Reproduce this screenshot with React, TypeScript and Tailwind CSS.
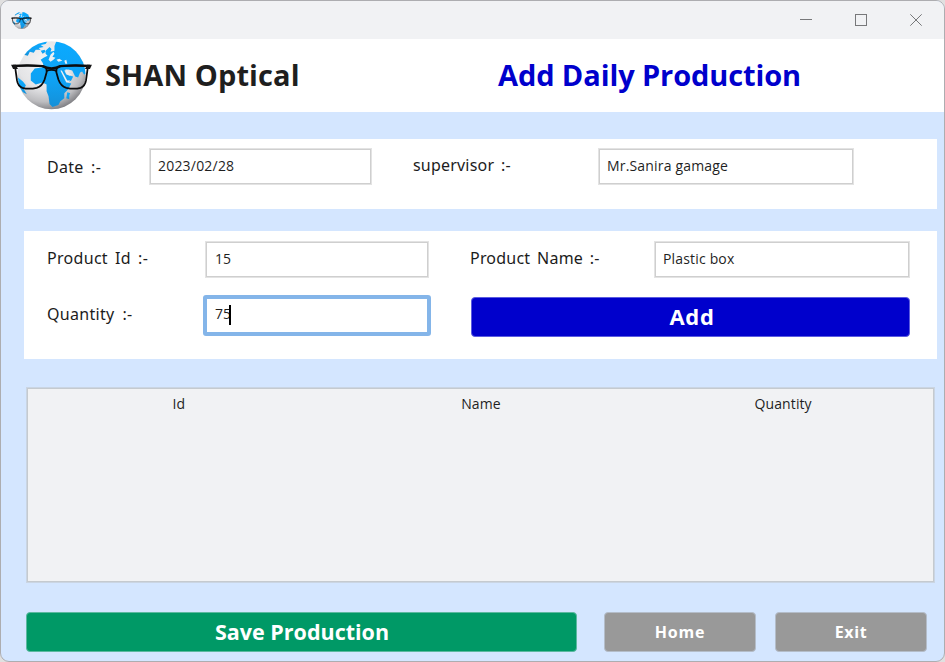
import type { ReactNode } from "react";

function Globe({ className, id, rim = 2.4 }: { className: string; id: string; rim?: number }) {
  return (
    <svg viewBox="0 0 84 72" className={className} aria-hidden="true">
      <defs>
        <radialGradient id={`${id}-sea`} cx="40%" cy="30%" r="72%">
          <stop offset="0" stopColor="#f4f4f5" />
          <stop offset="0.55" stopColor="#e4e4e6" />
          <stop offset="0.82" stopColor="#bdbdc0" />
          <stop offset="1" stopColor="#808084" />
        </radialGradient>
        <linearGradient id={`${id}-land`} x1="0" y1="0" x2="0" y2="1">
          <stop offset="0" stopColor="#0aaaff" />
          <stop offset="0.6" stopColor="#0fa2f4" />
          <stop offset="1" stopColor="#1590d8" />
        </linearGradient>
        <clipPath id={`${id}-clip`}>
          <circle cx="42" cy="35.8" r="34.5" />
        </clipPath>
      </defs>
      <circle cx="42" cy="35.8" r="34.5" fill={`url(#${id}-sea)`} />
      <g clipPath={`url(#${id}-clip)`}>
        <g fill={`url(#${id}-land)`}>
          <path d="M14 15 L18 9 L25 4 L33 1 L38 1 L36 4 L31 5 L34 7 L29 8 L31 10 L26 10 L24 13 L20 12 L18 16Z" />
          <path d="M31 11 L35 10 L36 12 L33 14Z" />
          <path d="M33 23 L31 20 L34 18 L38 16 L36 14 L36 11 L40 7 L42 9 L41 12 L45 11 L45 6 L47 1 L56 1 L68 8 L77 22 L78 34 L75 35 L73 32 L71 33 L69 38 L66 37 L63 31 L59 30 L55 31 L57 35 L60 36 L64 37 L62 41 L58 43 L62 44 L59 50 L55 54 L55 59 L51 62 L49 66 L43 68 L40 65 L39 57 L37 52 L37 45 L33 43 L26 45 L21 41 L21 34 L25 29 L32 28 L34 26Z" />
          <path d="M60 56 L61 54 L58 53 L57 59 L60 60Z" />
          <path d="M8 38 L13 42 L16 46 L14 50 L17 55 L13 53 L9 47Z" />
        </g>
        <g fill="#e9eff3">
          <path d="M39 20 L41 15 L44 12 L45 14 L43 17 L46 18 L44 20 L41 22Z" />
          <path d="M47 20 L50 19 L53 21 L49 22Z M55 21 L57 20 L58 24 L56 24Z" />
          <path d="M51 31 L52.5 31 L58 41 L61 41 L59 43 L57 43Z" />
          <path d="M56 30 L58 30 L60 34 L63 35 L60 36 L57 34Z" />
        </g>
      </g>
      <g fill="none" stroke="#0c0c0d">
        <path d="M5 26.5 Q18 25.3 33 26.5 Q38 27.5 37 33 L35 40 Q32.5 47 27 48.5 Q19 50.3 12.5 48.5 Q8 47 7 41 Z" strokeWidth={rim * 0.75} />
        <path d="M79 26.5 Q66 25.3 51 26.5 Q46 27.5 47 33 L49 40 Q51.5 47 57 48.5 Q65 50.3 71.5 48.5 Q76 47 77 41 Z" strokeWidth={rim * 0.75} />
        <path d="M3 26.3 Q18 25 33 26.5 Q37 28.6 42 28.8 Q47 28.6 51 26.5 Q66 25 81 26.3" strokeWidth={rim} />
        <path d="M36.5 31.5 Q42 29 47.5 31.5" strokeWidth={rim * 0.8} />
      </g>
      <path d="M1 25 L6 25 L8 29.5 L3 29.5Z M83 25 L78 25 L76 29.5 L81 29.5Z" fill="#161617" />
    </svg>
  );
}

function Label({ className, children }: { className: string; children: ReactNode }) {
  return (
    <label className={`block shrink-0 whitespace-pre font-['Noto_Sans',sans-serif] text-[16px] leading-6 text-[#1c1c1c] ${className}`}>
      {children}
    </label>
  );
}

function Field({ className, children }: { className: string; children: ReactNode }) {
  return (
    <div className={`h-[37px] shrink-0 whitespace-nowrap border border-[#e3e3e3] bg-white text-[14px] leading-5 ${className}`}>
      <div className="h-full w-full border border-[#cfcfcf] pl-[7px] pt-[5.5px]">{children}</div>
    </div>
  );
}

export default function App() {
  return (
    <div className="h-[662px] w-[945px] overflow-hidden bg-[#e0e0e0] font-['Open_Sans',sans-serif] text-[#1f1f1f]">
      <div className="flex h-full w-full flex-col overflow-hidden rounded-[9px] border border-[#adadb0] bg-[#d4e6ff]">
        <header className="flex h-[38px] shrink-0 items-center justify-between bg-[#f1f2f4]">
          <Globe id="small" rim={3.6} className="ml-[10px] h-[19px] w-[21px]" />
          <svg width="144" height="38" viewBox="0 0 144 38" fill="none" stroke="#77787a">
            <path d="M0 18.5H12" />
            <rect x="55.5" y="13.5" width="11" height="11" />
            <path d="M110.3 13.3 L121.7 24.7 M121.7 13.3 L110.3 24.7" />
          </svg>
        </header>

        <div className="flex h-[73px] shrink-0 bg-white">
          <Globe id="logo" className="ml-[9px] mt-[1px] h-[71px] w-[83px] shrink-0" />
          <h1 className="ml-[12px] mt-[16px] w-[393px] whitespace-nowrap text-[29px] font-bold leading-10 tracking-[0.1px]">SHAN Optical</h1>
          <h2 className="mt-[16px] whitespace-nowrap text-[29px] font-bold leading-10 tracking-[-0.1px] text-[#0000cc]">Add Daily Production</h2>
        </div>

        <section className="ml-[23px] mt-[27px] flex h-[70px] w-[913px] shrink-0 bg-white">
          <Label className="ml-[23px] mt-[16px] w-[102px] tracking-[0.3px] [word-spacing:3px]">Date :-</Label>
          <Field className="mt-[9px] w-[223px] tracking-[0.2px]">2023/02/28</Field>
          <Label className="ml-[41px] mt-[14px] w-[185px] tracking-[0.2px] [word-spacing:2.5px]">supervisor :-</Label>
          <Field className="mt-[9px] w-[256px] tracking-[0.17px]">Mr.Sanira gamage</Field>
        </section>

        <section className="ml-[23px] mt-[22px] h-[128px] w-[913px] shrink-0 bg-white">
          <div className="flex pt-[10px]">
            <Label className="ml-[23px] mt-[5px] w-[158px] tracking-[0.3px] [word-spacing:2.7px]">Product Id :-</Label>
            <Field className="w-[224px]"><span className="ml-[1px]">15</span></Field>
            <Label className="ml-[41px] mt-[5px] w-[184px] tracking-[0.2px] [word-spacing:2.5px]">Product Name :-</Label>
            <Field className="w-[256px] tracking-[0.17px]">Plastic box</Field>
          </div>
          <div className="flex pt-[17px]">
            <Label className="ml-[23px] mt-[7px] w-[156px] tracking-[0.3px] [word-spacing:3.5px]">Quantity :-</Label>
            <div className="flex h-[41px] w-[228px] rounded-[3px] border-4 border-[#84b5e9] pl-[8px] pt-[5px] text-[14px] leading-5">
              <span>75</span>
              <span className="-ml-[2px] mt-px h-5 w-[2px] bg-black" />
            </div>
            <button className="ml-[40px] mt-[2px] h-[40px] w-[439px] rounded-[4px] border border-[#5c5ce0] bg-[#0000cc] pb-[3px] pl-[3px] text-[22px] font-bold leading-[34px] tracking-[0.7px] text-white">Add</button>
          </div>
        </section>

        <section className="ml-[25px] mt-[28px] h-[196px] w-[909px] shrink-0 border border-[#cad5e3]">
          <div className="grid h-full grid-cols-3 border border-[#c5cacf] bg-[#f1f2f4] pt-[5px] text-center text-[14px] leading-5 tracking-[0.1px]">
            <span>Id</span>
            <span className="pl-px">Name</span>
            <span className="pl-[2px]">Quantity</span>
          </div>
        </section>

        <footer className="ml-[25px] mt-[29px] flex font-bold text-white">
          <button className="h-[40px] w-[551px] rounded-[4px] border border-[#5cb9a0] bg-[#009966] pl-[1px] text-[21.5px] leading-[38px]">Save Production</button>
          <button className="ml-[27px] h-[40px] w-[152px] rounded-[4px] border border-[#b4bdc9] bg-[#999999] text-[16px] leading-[38px] tracking-[0.8px]">Home</button>
          <button className="ml-[19px] h-[40px] w-[152px] rounded-[4px] border border-[#b4bdc9] bg-[#999999] text-[16px] leading-[38px] tracking-[0.6px]">Exit</button>
        </footer>
      </div>
    </div>
  );
}
